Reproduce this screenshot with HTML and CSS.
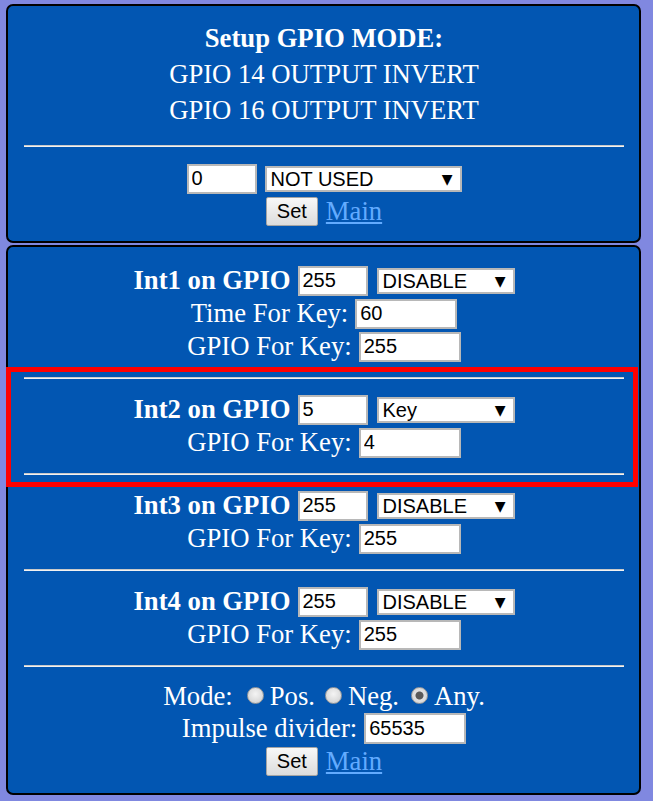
FILE: index.html
```html
<!DOCTYPE html>
<html>
<head>
<meta charset="utf-8">
<title>Setup GPIO MODE</title>
<link rel="stylesheet" href="styles.css">
</head>
<body>
<div class="page">
  <form class="box box-setup">
    <div class="line title">Setup GPIO MODE:</div>
    <div class="line">GPIO 14 OUTPUT INVERT</div>
    <div class="line">GPIO 16 OUTPUT INVERT</div>
    <hr class="sep sep-top">
    <div class="row">
      <input class="field field-int" type="text" value="0">
      <span class="select select-top gap8"><select><option>NOT USED</option></select></span>
    </div>
    <div class="row">
      <button class="btn" type="button">Set</button>
      <a class="link" href="#">Main</a>
    </div>
  </form>

  <form class="box box-ints">
    <div class="row"><span class="label strong">Int1 on GPIO</span><input class="field field-int gap" type="text" value="255"><span class="select select-int gap-sel"><select><option>DISABLE</option></select></span></div>
    <div class="row"><span class="label">Time For Key:</span><input class="field field-key gap" type="text" value="60"></div>
    <div class="row"><span class="label">GPIO For Key:</span><input class="field field-key gap" type="text" value="255"></div>
    <hr class="sep">
    <div class="row"><span class="label strong">Int2 on GPIO</span><input class="field field-int gap" type="text" value="5"><span class="select select-int gap-sel"><select><option>Key</option></select></span></div>
    <div class="row"><span class="label">GPIO For Key:</span><input class="field field-key gap" type="text" value="4"></div>
    <hr class="sep">
    <div class="row"><span class="label strong">Int3 on GPIO</span><input class="field field-int gap" type="text" value="255"><span class="select select-int gap-sel"><select><option>DISABLE</option></select></span></div>
    <div class="row"><span class="label">GPIO For Key:</span><input class="field field-key gap" type="text" value="255"></div>
    <hr class="sep">
    <div class="row"><span class="label strong">Int4 on GPIO</span><input class="field field-int gap" type="text" value="255"><span class="select select-int gap-sel"><select><option>DISABLE</option></select></span></div>
    <div class="row"><span class="label">GPIO For Key:</span><input class="field field-key gap" type="text" value="255"></div>
    <hr class="sep">
    <div class="row row-mode">
      <span class="label">Mode:</span>
      <input class="radio radio-first" type="radio" name="mode"><span class="label">Pos.</span>
      <input class="radio" type="radio" name="mode"><span class="label">Neg.</span>
      <input class="radio radio-last" type="radio" name="mode" checked><span class="label">Any.</span>
    </div>
    <div class="row"><span class="label">Impulse divider:</span><input class="field field-key field-tall gap" type="text" value="65535"></div>
    <div class="row">
      <button class="btn" type="button">Set</button>
      <a class="link" href="#">Main</a>
    </div>
    <div class="mark"></div>
  </form>
</div>
</body>
</html>
```

FILE: styles.css
```css
html, body {
  margin: 0;
  padding: 0;
}

body {
  background: #8088e0;
  color: #ffffff;
  font-family: "Liberation Serif", "Times New Roman", serif;
  font-size: 26.67px;
}

.page {
  padding: 4px 0 0 6px;
  width: 635px;
}

.box {
  position: relative;
  box-sizing: border-box;
  width: 635px;
  margin: 0;
  background: #0256b2;
  border: 2px solid #000000;
  border-radius: 7px;
  padding-left: 16px;
  padding-right: 15px;
}

.box-setup {
  padding-top: 14px;
  padding-bottom: 13px;
  margin-bottom: 2px;
}

.box-ints {
  padding-top: 17px;
  padding-bottom: 15px;
}

.line {
  height: 36px;
  line-height: 36px;
  text-align: center;
  white-space: nowrap;
}

.title {
  font-weight: bold;
}

.sep {
  margin: 14px 0;
  height: 0;
  border: 0;
  border-top: 1px solid #c9c9c9;
  border-bottom: 1px solid #f2f2f2;
}

.sep-top {
  margin: 17px 0 15px;
}

.row {
  display: flex;
  justify-content: center;
  align-items: center;
  height: 33px;
  white-space: nowrap;
}

.row-mode {
  height: 31px;
}

.label {
  line-height: 33px;
}

.strong {
  font-weight: bold;
}

.field {
  box-sizing: border-box;
  height: 30px;
  margin: 0;
  padding: 0 2px 0 3px;
  border: 2px solid #b8b8b8;
  border-radius: 0;
  background: #ffffff;
  color: #000000;
  font-family: "Liberation Sans", Arial, sans-serif;
  font-size: 20px;
  line-height: 26px;
  outline: none;
}

.field-int {
  width: 70px;
}

.field-key {
  width: 102px;
}

.field-tall {
  height: 31px;
}

.gap {
  margin-left: 7px;
}

.gap-sel {
  margin-left: 9px;
}

.gap8 {
  margin-left: 8px;
}

.select {
  position: relative;
  display: flex;
  height: 26px;
}

.select select {
  -webkit-appearance: none;
  appearance: none;
  display: block;
  box-sizing: border-box;
  height: 26px;
  margin: 0;
  padding: 0 0 0 4px;
  border: 2px solid #b8b8b8;
  border-radius: 0;
  background: #ffffff;
  color: #000000;
  font-family: "Liberation Sans", Arial, sans-serif;
  font-size: 20px;
  line-height: 22px;
  outline: none;
}

.select::after {
  content: "\25BC";
  position: absolute;
  right: 9px;
  top: 5px;
  font-family: "DejaVu Sans", sans-serif;
  font-size: 14px;
  line-height: 16px;
  color: #000000;
  pointer-events: none;
}

.select-int select {
  width: 138px;
}

.select-top select {
  width: 197px;
}

.btn {
  box-sizing: border-box;
  width: 52px;
  height: 29px;
  margin: 0;
  padding: 0;
  border: 1px solid #a4a4a4;
  border-radius: 2px;
  background: linear-gradient(#f8f8f8, #dcdcdc);
  color: #000000;
  font-family: "Liberation Sans", Arial, sans-serif;
  font-size: 20px;
}

.link {
  margin-left: 8px;
  line-height: 33px;
  color: #62abff;
  text-decoration: underline;
}

.radio {
  -webkit-appearance: none;
  appearance: none;
  box-sizing: border-box;
  width: 17px;
  height: 17px;
  margin: 0 6px 3px 10px;
  border: 1px solid #9c9c9c;
  border-radius: 50%;
  background: radial-gradient(circle at 50% 40%, #f4f4f4, #cdcdcd);
}

.radio:checked {
  background: radial-gradient(circle, #5a5a5a 0, #5a5a5a 3.5px, #e2e2e2 4.5px, #cdcdcd 100%);
}

.radio-first {
  margin-left: 14px;
}

.radio-last {
  margin-left: 12px;
}

.mark {
  position: absolute;
  left: -2px;
  top: 120px;
  box-sizing: border-box;
  width: 632px;
  height: 120px;
  border: 5px solid #ff0000;
  pointer-events: none;
}
```
